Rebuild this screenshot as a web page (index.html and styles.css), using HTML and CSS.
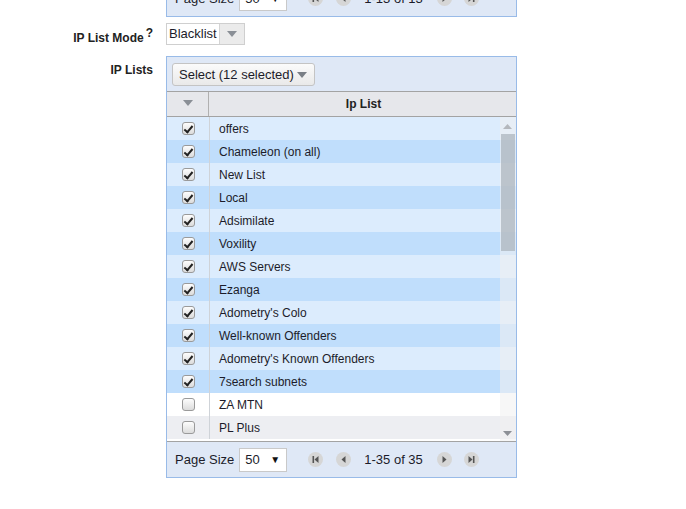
FILE: index.html
```html
<!DOCTYPE html>
<html>
<head>
<meta charset="utf-8">
<link rel="stylesheet" href="styles.css">
</head>
<body>
<div class="form">
  <div class="label"></div>
  <div class="panel top-panel">
    <div class="pager">
      <span class="ps-label">Page Size</span>
      <span class="ps-select"><span>50</span><span class="ps-arrow">▼</span></span>
      <span class="pbtn"><svg width="15" height="15" viewBox="0 0 15 15"><circle cx="7.5" cy="7.5" r="7.5" fill="#d6d6d6"/><rect x="4.5" y="4" width="1.6" height="7" fill="#555"/><path d="M10.5 4 L6.5 7.5 L10.5 11 Z" fill="#555"/></svg></span>
      <span class="pbtn"><svg width="15" height="15" viewBox="0 0 15 15"><circle cx="7.5" cy="7.5" r="7.5" fill="#d6d6d6"/><path d="M9.5 4 L5.5 7.5 L9.5 11 Z" fill="#555"/></svg></span>
      <span class="pinfo">1-13 of 13</span>
      <span class="pbtn"><svg width="15" height="15" viewBox="0 0 15 15"><circle cx="7.5" cy="7.5" r="7.5" fill="#d6d6d6"/><path d="M5.5 4 L9.5 7.5 L5.5 11 Z" fill="#555"/></svg></span>
      <span class="pbtn"><svg width="15" height="15" viewBox="0 0 15 15"><circle cx="7.5" cy="7.5" r="7.5" fill="#d6d6d6"/><path d="M4.5 4 L8.5 7.5 L4.5 11 Z" fill="#555"/><rect x="8.9" y="4" width="1.6" height="7" fill="#555"/></svg></span>
    </div>
  </div>

  <div class="label mode-label">IP List Mode<sup>?</sup></div>
  <div class="mode-row">
    <div class="mode-select">
      <span class="mode-text">Blacklist</span>
      <span class="mode-arrow"><svg width="10" height="6" viewBox="0 0 10 6"><path d="M0 0 H10 L5 6 Z" fill="#8a8f96"/></svg></span>
    </div>
  </div>

  <div class="label lists-label">IP Lists</div>
  <div class="panel list-panel">
    <div class="toolbar">
      <div class="ms-button">Select (12 selected)<svg class="ms-caret" width="10" height="6" viewBox="0 0 10 6"><path d="M0 0 H10 L5 6 Z" fill="#7a7f86"/></svg></div>
    </div>
    <div class="grid">
      <div class="grid-head">
        <div class="col-check"><svg width="10" height="6" viewBox="0 0 10 6"><path d="M0 0 H10 L5 6 Z" fill="#8a8f96"/></svg></div>
        <div class="col-name">Ip List</div>
      </div>
      <div class="grid-body">
        <div class="row sel"><div class="col-check"><span class="cb on"></span></div><div class="col-name">offers</div></div>
        <div class="row sel alt"><div class="col-check"><span class="cb on"></span></div><div class="col-name">Chameleon (on all)</div></div>
        <div class="row sel"><div class="col-check"><span class="cb on"></span></div><div class="col-name">New List</div></div>
        <div class="row sel alt"><div class="col-check"><span class="cb on"></span></div><div class="col-name">Local</div></div>
        <div class="row sel"><div class="col-check"><span class="cb on"></span></div><div class="col-name">Adsimilate</div></div>
        <div class="row sel alt"><div class="col-check"><span class="cb on"></span></div><div class="col-name">Voxility</div></div>
        <div class="row sel"><div class="col-check"><span class="cb on"></span></div><div class="col-name">AWS Servers</div></div>
        <div class="row sel alt"><div class="col-check"><span class="cb on"></span></div><div class="col-name">Ezanga</div></div>
        <div class="row sel"><div class="col-check"><span class="cb on"></span></div><div class="col-name">Adometry's Colo</div></div>
        <div class="row sel alt"><div class="col-check"><span class="cb on"></span></div><div class="col-name">Well-known Offenders</div></div>
        <div class="row sel"><div class="col-check"><span class="cb on"></span></div><div class="col-name">Adometry's Known Offenders</div></div>
        <div class="row sel alt"><div class="col-check"><span class="cb on"></span></div><div class="col-name">7search subnets</div></div>
        <div class="row"><div class="col-check"><span class="cb"></span></div><div class="col-name">ZA MTN</div></div>
        <div class="row alt"><div class="col-check"><span class="cb"></span></div><div class="col-name">PL Plus</div></div>
        <div class="scrollbar">
          <svg class="sb-up" width="9" height="5" viewBox="0 0 9 5"><path d="M0 5 H9 L4.5 0 Z" fill="#b5b8bd"/></svg>
          <div class="sb-thumb"></div>
          <svg class="sb-down" width="9" height="5" viewBox="0 0 9 5"><path d="M0 0 H9 L4.5 5 Z" fill="#8d9096"/></svg>
        </div>
      </div>
    </div>
    <div class="pager">
      <span class="ps-label">Page Size</span>
      <span class="ps-select"><span>50</span><span class="ps-arrow">▼</span></span>
      <span class="pbtn"><svg width="15" height="15" viewBox="0 0 15 15"><circle cx="7.5" cy="7.5" r="7.5" fill="#d6d6d6"/><rect x="4.5" y="4" width="1.6" height="7" fill="#555"/><path d="M10.5 4 L6.5 7.5 L10.5 11 Z" fill="#555"/></svg></span>
      <span class="pbtn"><svg width="15" height="15" viewBox="0 0 15 15"><circle cx="7.5" cy="7.5" r="7.5" fill="#d6d6d6"/><path d="M9.5 4 L5.5 7.5 L9.5 11 Z" fill="#555"/></svg></span>
      <span class="pinfo">1-35 of 35</span>
      <span class="pbtn"><svg width="15" height="15" viewBox="0 0 15 15"><circle cx="7.5" cy="7.5" r="7.5" fill="#d6d6d6"/><path d="M5.5 4 L9.5 7.5 L5.5 11 Z" fill="#555"/></svg></span>
      <span class="pbtn"><svg width="15" height="15" viewBox="0 0 15 15"><circle cx="7.5" cy="7.5" r="7.5" fill="#d6d6d6"/><path d="M4.5 4 L8.5 7.5 L4.5 11 Z" fill="#555"/><rect x="8.9" y="4" width="1.6" height="7" fill="#555"/></svg></span>
    </div>
  </div>
</div>
</body>
</html>
```
FILE: styles.css
```css
html, body {
  margin: 0;
  padding: 0;
  background: #fff;
}
body {
  font-family: "Liberation Sans", Arial, sans-serif;
  font-size: 13px;
  color: #1c1c2a;
  overflow: hidden;
}
.form {
  display: grid;
  grid-template-columns: 153px 351px;
  column-gap: 13px;
  align-items: start;
}
.label {
  text-align: right;
  font-weight: bold;
  font-size: 12px;
  color: #222;
}
.label sup {
  font-size: 12px;
  line-height: 0;
  vertical-align: 5px;
  margin-left: 2px;
}
.panel {
  background: #dfe8f6;
  border: 1px solid #99bbe8;
  box-sizing: border-box;
}
.top-panel {
  margin-top: -20px;
}
.pager {
  height: 35px;
  display: flex;
  align-items: center;
  padding-left: 8px;
  box-sizing: border-box;
}
.ps-label {
  margin-right: 5px;
}
.ps-select {
  width: 48px;
  height: 24px;
  box-sizing: border-box;
  background: #fff;
  border: 1px solid #c9c9c9;
  display: flex;
  align-items: center;
  padding-left: 5px;
  padding-right: 6px;
  justify-content: space-between;
  margin-right: 21px;
}
.ps-arrow {
  font-size: 10px;
  color: #111;
}
.pbtn {
  width: 15px;
  height: 15px;
  display: inline-flex;
}
.pbtn svg {
  display: block;
}
.pbtn + .pbtn {
  margin-left: 13px;
}
.pinfo {
  margin: 0 14px 0 13px;
}
.pinfo + .pbtn + .pbtn {
  margin-left: 12px;
}
.mode-label {
  margin-top: 14px;
}
.mode-row {
  margin-top: 6px;
}
.mode-select {
  width: 79px;
  height: 22px;
  box-sizing: border-box;
  border: 1px solid #cfcfcf;
  display: flex;
  background: #fff;
}
.mode-text {
  flex: 1;
  padding-left: 2px;
  line-height: 20px;
}
.mode-arrow {
  width: 24px;
  background: #ebebeb;
  border-left: 1px solid #d4d4d4;
  display: flex;
  align-items: center;
  justify-content: center;
}
.lists-label {
  margin-top: 18px;
}
.list-panel {
  margin-top: 11px;
}
.toolbar {
  height: 34px;
  padding: 6px 0 0 5px;
  box-sizing: border-box;
}
.ms-button {
  width: 143px;
  height: 23px;
  box-sizing: border-box;
  border: 1px solid #c4c4c4;
  border-radius: 3px;
  background: linear-gradient(#fbfbfb, #e9e9e9);
  display: flex;
  align-items: center;
  padding-left: 6px;
  color: #1c1c2a;
}
.ms-caret {
  margin-left: 3px;
}
.grid {
  border-top: 1px solid #a3a3a3;
  border-bottom: 1px solid #a3a3a3;
  background: #fff;
}
.grid-head {
  display: flex;
  height: 25px;
  background: #e6e7eb;
  border-bottom: 1px solid #a3a3a3;
  box-sizing: border-box;
  font-weight: bold;
  font-size: 12px;
  color: #222;
}
.grid-head .col-check {
  border-right: 1px solid #b0b0b0;
  padding-bottom: 2px;
  box-sizing: border-box;
}
.grid-head .col-name {
  justify-content: center;
  padding-left: 2px;
}
.col-check {
  width: 42px;
  flex: none;
  display: flex;
  align-items: center;
  justify-content: center;
  border-right: 1px solid #cfd3d8;
}
.col-name {
  flex: 1;
  display: flex;
  align-items: center;
  padding-left: 9px;
}
.grid-body {
  position: relative;
  height: 324px;
  overflow: hidden;
  font-size: 12px;
}
.row {
  display: flex;
  height: 23px;
  background: #ffffff;
}
.row.alt {
  background: #edeef2;
}
.row.sel {
  background: #dcecfd;
}
.row.sel.alt {
  background: #c0defc;
}
.cb {
  width: 13px;
  height: 13px;
  box-sizing: border-box;
  border: 1px solid #9a9a9a;
  border-radius: 3px;
  background: linear-gradient(#fdfdfd, #dcdcdc);
  position: relative;
}
.cb.on::after {
  content: "";
  position: absolute;
  left: 3.5px;
  top: 0.5px;
  width: 3px;
  height: 7px;
  border: solid #222;
  border-width: 0 2.2px 2.2px 0;
  transform: rotate(40deg);
}
.scrollbar {
  position: absolute;
  top: 0;
  right: 0;
  width: 16px;
  height: 324px;
  background: rgba(240, 240, 240, 0.55);
}
.sb-up {
  position: absolute;
  left: 3px;
  top: 7px;
}
.sb-thumb {
  position: absolute;
  left: 1px;
  top: 17px;
  width: 14px;
  height: 117px;
  background: rgba(170, 178, 186, 0.7);
}
.sb-down {
  position: absolute;
  left: 3px;
  top: 314px;
}
```
